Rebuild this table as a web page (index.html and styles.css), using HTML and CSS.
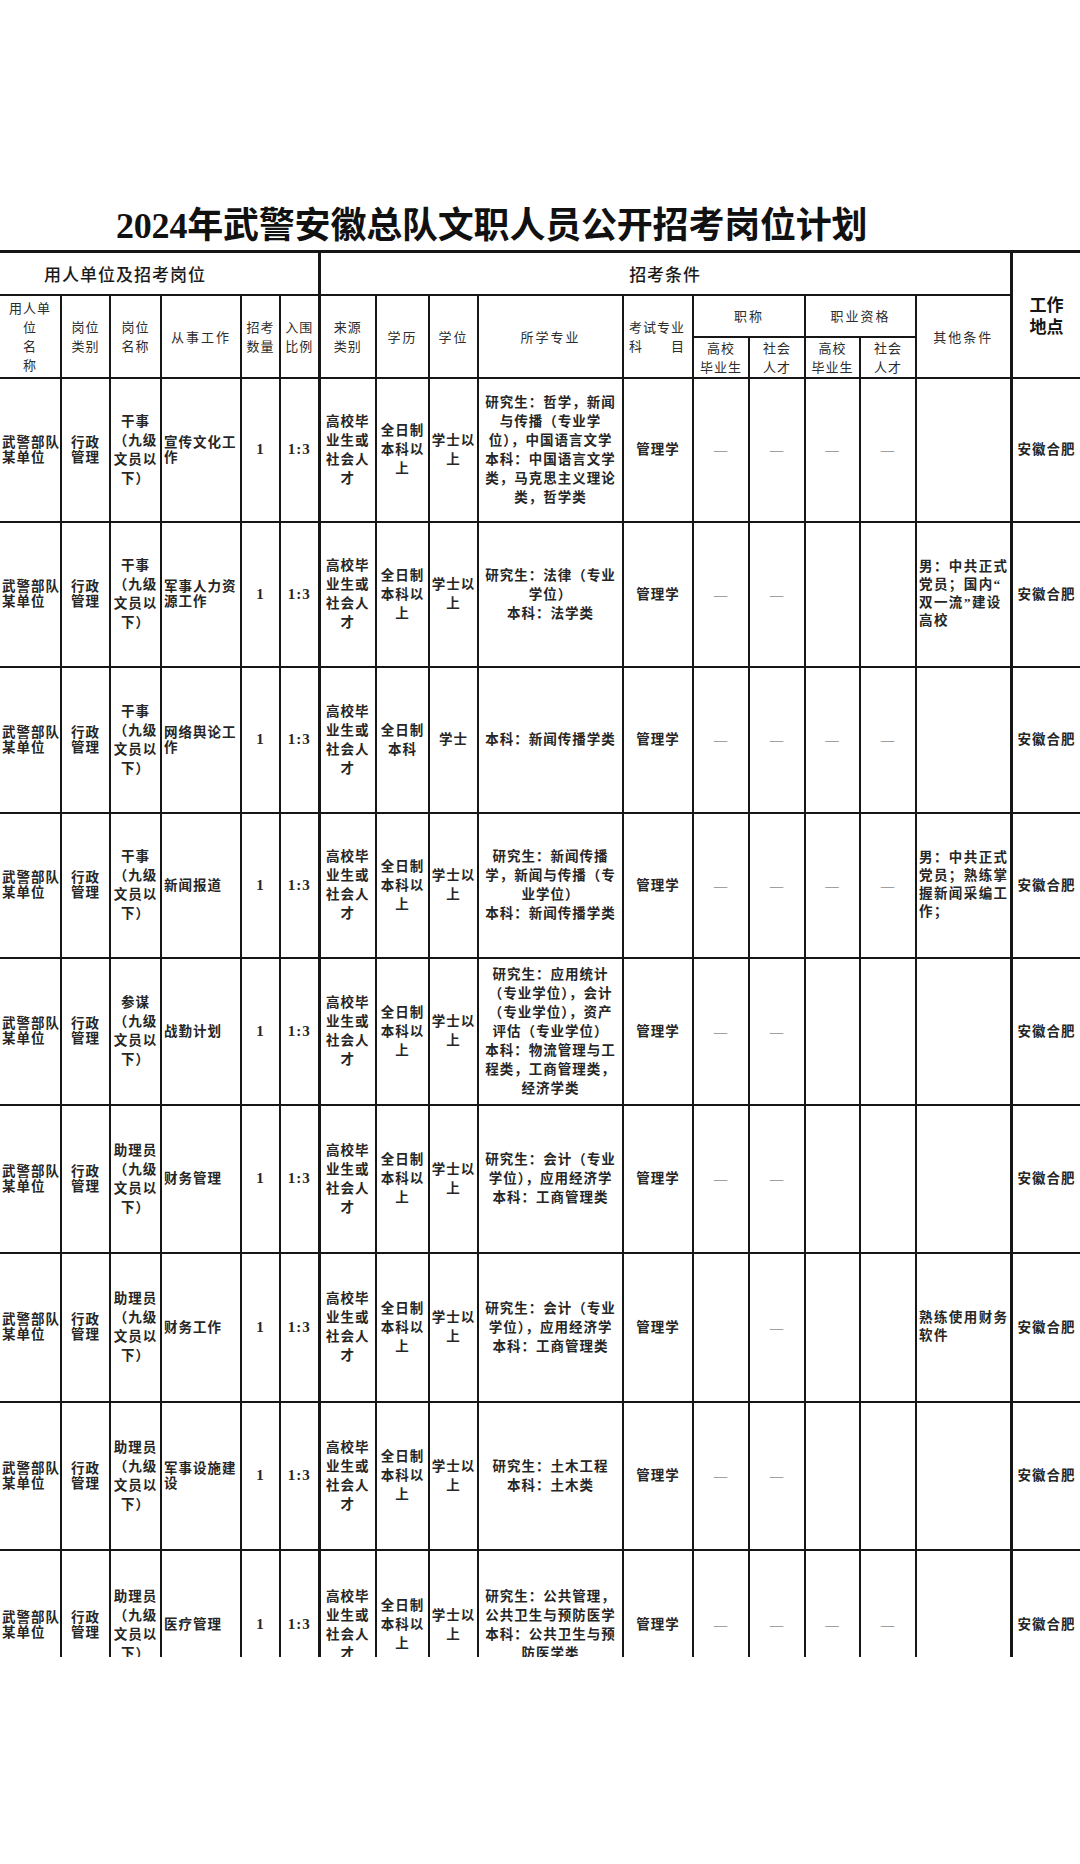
FILE: index.html
```html
<!DOCTYPE html>
<html lang="zh-CN">
<head>
<meta charset="utf-8">
<title>2024年武警安徽总队文职人员公开招考岗位计划</title>
<link rel="stylesheet" href="styles.css">
</head>
<body>
<div class="page">
  <h1 class="title">2024年武警安徽总队文职人员公开招考岗位计划</h1>
  <div class="sheet">
    <table class="plan">
      <colgroup>
        <col class="w-unit"><col class="w-cat"><col class="w-name"><col class="w-work"><col class="w-num"><col class="w-ratio">
        <col class="w-src"><col class="w-edu"><col class="w-deg"><col class="w-major"><col class="w-exam">
        <col class="w-t1"><col class="w-t2"><col class="w-q1"><col class="w-q2"><col class="w-other"><col class="w-place">
      </colgroup>
      <thead>
        <tr class="hr1">
          <th colspan="6" class="grp grp-left">用人单位及招考岗位</th>
          <th colspan="10" class="grp thick-l">招考条件</th>
          <th rowspan="3" class="place-h thick-l">工作<br>地点</th>
        </tr>
        <tr class="hr2">
          <th rowspan="2" class="sub">用人单<br>位<br>名<br>称</th>
          <th rowspan="2" class="sub">岗位<br>类别</th>
          <th rowspan="2" class="sub">岗位<br>名称</th>
          <th rowspan="2" class="sub sp">从事工作</th>
          <th rowspan="2" class="sub">招考<br>数量</th>
          <th rowspan="2" class="sub">入围<br>比例</th>
          <th rowspan="2" class="sub thick-l">来源<br>类别</th>
          <th rowspan="2" class="sub sp">学历</th>
          <th rowspan="2" class="sub sp">学位</th>
          <th rowspan="2" class="sub sp">所学专业</th>
          <th rowspan="2" class="sub exam-h">考试专业<br>科　　目</th>
          <th colspan="2" class="sub sp">职称</th>
          <th colspan="2" class="sub sp">职业资格</th>
          <th rowspan="2" class="sub sp">其他条件</th>
        </tr>
        <tr class="hr3">
          <th class="sub">高校<br>毕业生</th>
          <th class="sub">社会<br>人才</th>
          <th class="sub">高校<br>毕业生</th>
          <th class="sub">社会<br>人才</th>
        </tr>
      </thead>
      <tbody>
        <tr class="r1">
          <td class="lt tight">武警部队<br>某单位</td>
          <td class="tight">行政<br>管理</td>
          <td>干事<br>（九级<br>文员以<br>下）</td>
          <td class="lt tight">宣传文化工<br>作</td>
          <td class="num">1</td>
          <td class="num">1:3</td>
          <td class="thick-l">高校毕<br>业生或<br>社会人<br>才</td>
          <td>全日制<br>本科以<br>上</td>
          <td>学士以<br>上</td>
          <td>研究生：哲学，新闻<br>与传播（专业学<br>位），中国语言文学<br>本科：中国语言文学<br>类，马克思主义理论<br>类，哲学类</td>
          <td>管理学</td>
          <td class="dash">—</td>
          <td class="dash">—</td>
          <td class="dash">—</td>
          <td class="dash">—</td>
          <td class="lt other"></td>
          <td class="thick-l">安徽合肥</td>
        </tr>
        <tr class="r2">
          <td class="lt tight">武警部队<br>某单位</td>
          <td class="tight">行政<br>管理</td>
          <td>干事<br>（九级<br>文员以<br>下）</td>
          <td class="lt tight">军事人力资<br>源工作</td>
          <td class="num">1</td>
          <td class="num">1:3</td>
          <td class="thick-l">高校毕<br>业生或<br>社会人<br>才</td>
          <td>全日制<br>本科以<br>上</td>
          <td>学士以<br>上</td>
          <td>研究生：法律（专业<br>学位）<br>本科：法学类</td>
          <td>管理学</td>
          <td class="dash">—</td>
          <td class="dash">—</td>
          <td></td>
          <td></td>
          <td class="lt other">男：中共正式<br>党员；国内“<br>双一流”建设<br>高校</td>
          <td class="thick-l">安徽合肥</td>
        </tr>
        <tr class="r3">
          <td class="lt tight">武警部队<br>某单位</td>
          <td class="tight">行政<br>管理</td>
          <td>干事<br>（九级<br>文员以<br>下）</td>
          <td class="lt tight">网络舆论工<br>作</td>
          <td class="num">1</td>
          <td class="num">1:3</td>
          <td class="thick-l">高校毕<br>业生或<br>社会人<br>才</td>
          <td>全日制<br>本科</td>
          <td>学士</td>
          <td>本科：新闻传播学类</td>
          <td>管理学</td>
          <td class="dash">—</td>
          <td class="dash">—</td>
          <td class="dash">—</td>
          <td class="dash">—</td>
          <td class="lt other"></td>
          <td class="thick-l">安徽合肥</td>
        </tr>
        <tr class="r4">
          <td class="lt tight">武警部队<br>某单位</td>
          <td class="tight">行政<br>管理</td>
          <td>干事<br>（九级<br>文员以<br>下）</td>
          <td class="lt tight">新闻报道</td>
          <td class="num">1</td>
          <td class="num">1:3</td>
          <td class="thick-l">高校毕<br>业生或<br>社会人<br>才</td>
          <td>全日制<br>本科以<br>上</td>
          <td>学士以<br>上</td>
          <td>研究生：新闻传播<br>学，新闻与传播（专<br>业学位）<br>本科：新闻传播学类</td>
          <td>管理学</td>
          <td class="dash">—</td>
          <td class="dash">—</td>
          <td class="dash">—</td>
          <td class="dash">—</td>
          <td class="lt other">男：中共正式<br>党员；熟练掌<br>握新闻采编工<br>作；</td>
          <td class="thick-l">安徽合肥</td>
        </tr>
        <tr class="r5">
          <td class="lt tight">武警部队<br>某单位</td>
          <td class="tight">行政<br>管理</td>
          <td>参谋<br>（九级<br>文员以<br>下）</td>
          <td class="lt tight">战勤计划</td>
          <td class="num">1</td>
          <td class="num">1:3</td>
          <td class="thick-l">高校毕<br>业生或<br>社会人<br>才</td>
          <td>全日制<br>本科以<br>上</td>
          <td>学士以<br>上</td>
          <td>研究生：应用统计<br>（专业学位），会计<br>（专业学位），资产<br>评估（专业学位）<br>本科：物流管理与工<br>程类，工商管理类，<br>经济学类</td>
          <td>管理学</td>
          <td class="dash">—</td>
          <td class="dash">—</td>
          <td></td>
          <td></td>
          <td class="lt other"></td>
          <td class="thick-l">安徽合肥</td>
        </tr>
        <tr class="r6">
          <td class="lt tight">武警部队<br>某单位</td>
          <td class="tight">行政<br>管理</td>
          <td>助理员<br>（九级<br>文员以<br>下）</td>
          <td class="lt tight">财务管理</td>
          <td class="num">1</td>
          <td class="num">1:3</td>
          <td class="thick-l">高校毕<br>业生或<br>社会人<br>才</td>
          <td>全日制<br>本科以<br>上</td>
          <td>学士以<br>上</td>
          <td>研究生：会计（专业<br>学位），应用经济学<br>本科：工商管理类</td>
          <td>管理学</td>
          <td class="dash">—</td>
          <td class="dash">—</td>
          <td></td>
          <td></td>
          <td class="lt other"></td>
          <td class="thick-l">安徽合肥</td>
        </tr>
        <tr class="r7">
          <td class="lt tight">武警部队<br>某单位</td>
          <td class="tight">行政<br>管理</td>
          <td>助理员<br>（九级<br>文员以<br>下）</td>
          <td class="lt tight">财务工作</td>
          <td class="num">1</td>
          <td class="num">1:3</td>
          <td class="thick-l">高校毕<br>业生或<br>社会人<br>才</td>
          <td>全日制<br>本科以<br>上</td>
          <td>学士以<br>上</td>
          <td>研究生：会计（专业<br>学位），应用经济学<br>本科：工商管理类</td>
          <td>管理学</td>
          <td></td>
          <td class="dash">—</td>
          <td></td>
          <td></td>
          <td class="lt other">熟练使用财务<br>软件</td>
          <td class="thick-l">安徽合肥</td>
        </tr>
        <tr class="r8">
          <td class="lt tight">武警部队<br>某单位</td>
          <td class="tight">行政<br>管理</td>
          <td>助理员<br>（九级<br>文员以<br>下）</td>
          <td class="lt tight">军事设施建<br>设</td>
          <td class="num">1</td>
          <td class="num">1:3</td>
          <td class="thick-l">高校毕<br>业生或<br>社会人<br>才</td>
          <td>全日制<br>本科以<br>上</td>
          <td>学士以<br>上</td>
          <td>研究生：土木工程<br>本科：土木类</td>
          <td>管理学</td>
          <td class="dash">—</td>
          <td class="dash">—</td>
          <td></td>
          <td></td>
          <td class="lt other"></td>
          <td class="thick-l">安徽合肥</td>
        </tr>
        <tr class="r9">
          <td class="lt tight">武警部队<br>某单位</td>
          <td class="tight">行政<br>管理</td>
          <td>助理员<br>（九级<br>文员以<br>下）</td>
          <td class="lt tight">医疗管理</td>
          <td class="num">1</td>
          <td class="num">1:3</td>
          <td class="thick-l">高校毕<br>业生或<br>社会人<br>才</td>
          <td>全日制<br>本科以<br>上</td>
          <td>学士以<br>上</td>
          <td>研究生：公共管理，<br>公共卫生与预防医学<br>本科：公共卫生与预<br>防医学类</td>
          <td>管理学</td>
          <td class="dash">—</td>
          <td class="dash">—</td>
          <td class="dash">—</td>
          <td class="dash">—</td>
          <td class="lt other"></td>
          <td class="thick-l">安徽合肥</td>
        </tr>
      </tbody>
    </table>
  </div>
</div>
</body>
</html>
```

FILE: styles.css
```css
html, body {
  margin: 0;
  padding: 0;
  background: #ffffff;
}

body {
  width: 1080px;
  height: 1864px;
  overflow: hidden;
  font-family: "Noto Sans CJK SC", sans-serif;
  color: #1b1b1b;
}

.page {
  width: 1080px;
  height: 1864px;
  overflow: hidden;
}

.title {
  margin: 203px 0 0 0;
  padding-left: 116px;
  height: 47px;
  font-family: "Liberation Serif", "Noto Sans CJK SC", serif;
  font-size: 36px;
  font-weight: 700;
  line-height: 47px;
  letter-spacing: -0.2px;
  white-space: nowrap;
  color: #111111;
}

.sheet {
  width: 1080px;
  height: 1407px;
  overflow: hidden;
}

.plan {
  border-collapse: collapse;
  table-layout: fixed;
  width: 1082px;
  margin-left: -2px;
}

.w-unit { width: 62px; }
.w-cat { width: 49px; }
.w-name { width: 51px; }
.w-work { width: 80px; }
.w-num { width: 39px; }
.w-ratio { width: 39px; }
.w-src { width: 57px; }
.w-edu { width: 53px; }
.w-deg { width: 49px; }
.w-major { width: 145px; }
.w-exam { width: 70px; }
.w-t1 { width: 56px; }
.w-t2 { width: 56px; }
.w-q1 { width: 55px; }
.w-q2 { width: 56px; }
.w-other { width: 95px; }
.w-place { width: 70px; }

.plan th,
.plan td {
  border: 2px solid #161616;
  padding: 0 1px;
  vertical-align: middle;
  text-align: center;
  white-space: nowrap;
  overflow: hidden;
}

.plan .thick-l {
  border-left-width: 3px;
}

.hr1 th {
  border-top-width: 3px;
}

.hr1 { height: 43px; }
.hr2 { height: 42px; }
.hr3 { height: 41px; }

.plan th.grp {
  font-size: 17px;
  font-weight: 500;
  letter-spacing: 1px;
  color: #1a1a1a;
}

.plan th.grp-left {
  text-align: left;
  padding-left: 44px;
}

.plan th.place-h {
  font-size: 17px;
  font-weight: 700;
  line-height: 22px;
  color: #151515;
}

.plan th.sub {
  font-size: 13px;
  font-weight: 400;
  line-height: 19px;
  letter-spacing: 1px;
  color: #2c2c2c;
}

.plan th.sub.sp {
  letter-spacing: 2px;
}

.plan th.exam-h {
  text-align: left;
  padding-left: 5px;
}

.plan td {
  font-family: "Liberation Serif", "Noto Sans CJK SC", serif;
  font-size: 13.5px;
  font-weight: 700;
  line-height: 19px;
  letter-spacing: 1px;
  color: #262626;
}

.plan td.lt {
  text-align: left;
  padding-left: 2px;
}

.plan td.tight {
  line-height: 15px;
}

.plan td.other {
  line-height: 18px;
  letter-spacing: 1.4px;
}

.plan td.num {
  font-size: 15px;
  font-weight: 700;
}

.plan td.dash {
  color: #555555;
  font-weight: 400;
}

.r1 { height: 144px; }
.r2 { height: 145px; }
.r3 { height: 146px; }
.r4 { height: 145px; }
.r5 { height: 147px; }
.r6 { height: 148px; }
.r7 { height: 149px; }
.r8 { height: 148px; }
.r9 { height: 150px; }
```
